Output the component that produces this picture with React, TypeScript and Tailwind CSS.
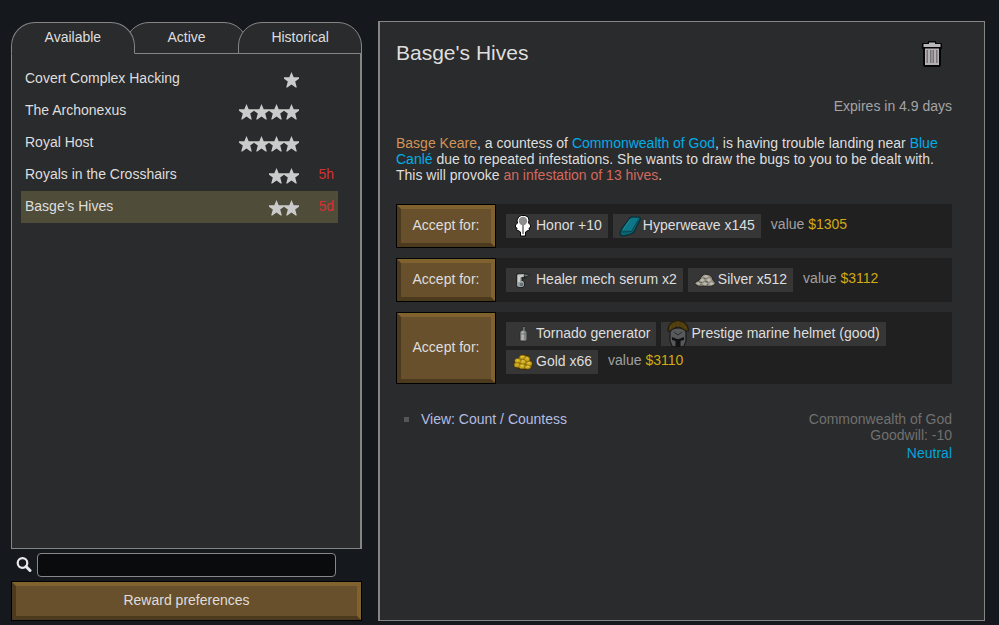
import { useState } from "react";
import type { ReactNode } from "react";

type Quest = { name: string; stars: number; expires?: string };

const quests: Quest[] = [
  { name: "Covert Complex Hacking", stars: 1 },
  { name: "The Archonexus", stars: 4 },
  { name: "Royal Host", stars: 4 },
  { name: "Royals in the Crosshairs", stars: 2, expires: "5h" },
  { name: "Basge's Hives", stars: 2, expires: "5d" },
];

function Star() {
  return (
    <svg width="15" height="16" viewBox="0 0 15 16" fill="#cbcbcb" aria-hidden="true">
      <path d="M7.5 0L9.700 5.200H15V6.700L11.200 9.600L12.800 15.600H11.700L7.500 12.500L3.300 15.600H2.200L3.800 9.600L0 6.700V5.200H5.300Z" />
    </svg>
  );
}

function TrashIcon() {
  return (
    <svg width="20" height="26" viewBox="0 0 20 26" aria-hidden="true">
      <path d="M6 0H14V2H20V8H19V24L18 26H2L1 24V8H0V2H6Z" fill="#050505" />
      <path d="M7 1.500H13V3H18.500V6H1.500V3H7Z" fill="#b9b6b9" />
      <path d="M3 7.500H17V24H3Z" fill="#b4b1b4" />
      <path d="M4.500 9H6V22H4.500ZM8 9H9.500V22H8ZM10.500 9H12V22H10.500ZM14 9H15.500V22H14Z" fill="#777377" />
    </svg>
  );
}

function SearchIcon() {
  return (
    <svg width="16" height="16" viewBox="0 0 16 16" fill="none" aria-hidden="true">
      <circle cx="6.500" cy="6" r="4.800" stroke="#e8eaec" strokeWidth="2.200" />
      <path d="M10 9.500L14 13.500" stroke="#e8eaec" strokeWidth="3" strokeLinecap="round" />
    </svg>
  );
}

function HonorIcon() {
  return (
    <svg width="18" height="24" viewBox="0 0 18 24" aria-hidden="true">
      <path
        d="M5 2.500L7.500 1.500H11L14 3L15 6L14.500 9L16.500 11V13.500L15 14L15.500 16L13 17L11.500 18V22H6.500V18L5 17L2.500 16L3 14L1.500 13.500V11L3.500 9L3 6Z"
        fill="#ffffff"
        stroke="#050505"
        strokeWidth="1"
      />
      <circle cx="9" cy="7" r="4.200" fill="#8d8d8d" />
      <path d="M8 9H10V20H8Z" fill="#8d8d8d" />
    </svg>
  );
}

function HyperweaveIcon() {
  return (
    <svg width="22" height="21" viewBox="0 0 22 21" aria-hidden="true">
      <path
        d="M10 3Q11 1 13 1L20 1Q22 2 21 4L16 14Q15 17 12 18L5 20Q1 20 1 17L2 14Z"
        fill="#0b6473"
        stroke="#062c33"
        strokeWidth="1.200"
      />
      <path d="M11.500 3Q12 2 13 2H19.500L13 14.500L3.500 14.500Z" fill="#0e7787" />
      <path d="M2.500 16L12.500 15.500L19.500 3.500" fill="none" stroke="#084650" strokeWidth="1" />
      <path d="M4 13.500L11 3.500" fill="none" stroke="#1f93a2" strokeWidth="1" />
    </svg>
  );
}

function SerumIcon() {
  return (
    <svg width="16" height="17" viewBox="0 0 16 17" aria-hidden="true">
      <path d="M1 3Q1 1 3 1H9L15 2V4L11 5V6L8 7V9L10 10V14L8 16H3L1 14Z" fill="#242728" />
      <path d="M2 3Q3 1.800 5 2H9V5H6.500V9H8L9 11V14L7 15H4L2 14Z" fill="#9da29f" />
      <path d="M3 3.500L8 3V4.500L5 5.500V10H3Z" fill="#cccec9" />
      <path d="M9 2.500L14.500 3L10 4.500Z" fill="#737a78" />
      <circle cx="6.500" cy="12.500" r="1.800" fill="#5c717b" />
    </svg>
  );
}

function SilverIcon() {
  return (
    <svg width="22" height="14" viewBox="0 0 22 14" aria-hidden="true">
      <path
        d="M.5 11L2 8.500L5 7.500L7 4L10 1L15 1.500L18 4L19 7L21.500 10L20 12.500L15 13.500L10 13L5 13.500Z"
        fill="#8d897e"
        stroke="#2a2824"
        strokeWidth="1"
      />
      <path
        d="M9 3.500L12 2L15 3.500L12 5ZM5.500 7.500L8 5.500L11 7L8 9ZM12 7L15 5L17.500 7L15 9ZM2 10.500L4.500 9L7 10.500L5 12ZM8 11L11 9L13.500 11L11 12.500ZM14.500 11L17.500 9L20 10.500L17 12.500Z"
        fill="#bdb9ac"
      />
      <path d="M5 9L8 9.500M10 5L12 6M11 8L14 9M14 11L13 12M7 11L6 12.500" stroke="#5a574f" strokeWidth=".8" />
    </svg>
  );
}

function GeneratorIcon() {
  return (
    <svg width="9" height="16" viewBox="0 0 9 16" aria-hidden="true">
      <path d="M4 0H6V4L8 5.500V14L7 15.500H1.500L.5 14V6L3 4Z" fill="#292b2c" />
      <path d="M4.400 1H5.400V5H4.400Z" fill="#a5a7a8" />
      <path d="M1.300 6L3 4.500H6L7.500 6V14L6.500 14.700H2L1.300 14Z" fill="#858788" />
      <path d="M2.500 5.500H4.800V14H2.500Z" fill="#b4b5b5" />
      <path d="M1.500 7.500H7.300V8.300H1.500Z" fill="#6b6e70" />
    </svg>
  );
}

function HelmetIcon() {
  return (
    <svg width="22" height="28" viewBox="0 0 22 28" aria-hidden="true">
      <path d="M1 11Q1 4 6 2Q11 -.5 16 2Q21 4 21.500 11L17 11Q14 7 11 7Q8 7 5 11Z" fill="#4f3c0f" stroke="#211b0d" strokeWidth="1.200" />
      <path d="M6 3L8 7M11 2V7M16 3L14 7M3 6L6 9M19 6L16 9" stroke="#604a14" strokeWidth=".8" />
      <path d="M3 12Q5 8 11 8Q17 8 19 12L19 21L17 26L13 27V20H9V27L5 26L3 21Z" fill="#58595b" stroke="#191a1b" strokeWidth="1.200" />
      <path d="M7 12L11 15L15 12" fill="none" stroke="#27292a" strokeWidth="1" />
      <path d="M5 17L10 19H12L17 17V20L13 21V27H9V21L5 20Z" fill="#111213" />
    </svg>
  );
}

function GoldIcon() {
  return (
    <svg width="20" height="16" viewBox="0 0 20 16" aria-hidden="true">
      <path
        d="M.8 10L2 6L6 4L7 1.500L12 .8L16 2L17 6L19.300 9L19 13L14 15.300L8 15.300L2 13Z"
        fill="#8c6c0e"
        stroke="#382b08"
        strokeWidth="1"
      />
      <g fill="#cfab20" stroke="#7d600d" strokeWidth=".5">
        <ellipse cx="9.500" cy="3.200" rx="3" ry="2" />
        <ellipse cx="14" cy="5" rx="2.800" ry="2.300" />
        <ellipse cx="4.800" cy="6.800" rx="3" ry="2.200" />
        <ellipse cx="10" cy="7.800" rx="3" ry="2.300" />
        <ellipse cx="4" cy="11" rx="2.800" ry="2.200" />
        <ellipse cx="9" cy="12.200" rx="3" ry="2.400" />
        <ellipse cx="16" cy="9.500" rx="3" ry="2.200" />
        <ellipse cx="14.700" cy="13" rx="3" ry="1.900" />
      </g>
      <path d="M8 2.500H10.500M3.500 6H5.500M9 7H11M13 4H15M8 11.500H10M15 8.800H17M14 12.500H16" stroke="#e6c944" strokeWidth="1" />
    </svg>
  );
}

type Reward = { label: string; icon: ReactNode };
type Offer = { rewards: Reward[]; value: string };

const offers: Offer[] = [
  {
    rewards: [
      { label: "Honor +10", icon: <HonorIcon /> },
      { label: "Hyperweave x145", icon: <HyperweaveIcon /> },
    ],
    value: "$1305",
  },
  {
    rewards: [
      { label: "Healer mech serum x2", icon: <SerumIcon /> },
      { label: "Silver x512", icon: <SilverIcon /> },
    ],
    value: "$3112",
  },
  {
    rewards: [
      { label: "Tornado generator", icon: <GeneratorIcon /> },
      { label: "Prestige marine helmet (good)", icon: <HelmetIcon /> },
      { label: "Gold x66", icon: <GoldIcon /> },
    ],
    value: "$3110",
  },
];

function BevelButton({ className, children }: { className: string; children: ReactNode }) {
  return (
    <button type="button" className={`flex border border-black ${className}`}>
      <span className="flex flex-1 items-center justify-center self-stretch border-4 border-t-[#80622f] border-r-[#80622f] border-b-[#4c3a1f] border-l-[#4c3a1f] bg-[#69502c] pb-0.5">
        {children}
      </span>
    </button>
  );
}

function Tabs() {
  const [active, setActive] = useState("Available");
  const tabs = [
    { name: "Available", place: "z-10" },
    { name: "Active", place: "-ml-2.5" },
    { name: "Historical", place: "-ml-2.5" },
  ];
  return (
    <div role="tablist" className="isolate flex">
      {tabs.map((tab) => (
        <button
          key={tab.name}
          type="button"
          role="tab"
          aria-selected={tab.name === active}
          onClick={() => setActive(tab.name)}
          className={`relative -mb-px h-8 flex-1 basis-0 rounded-t-[24px] border border-[#858585] bg-[#2a2b2c] pb-0.5 ${tab.place} ${
            tab.name === active ? "border-b-[#2a2b2c]" : ""
          }`}
        >
          {tab.name}
        </button>
      ))}
    </div>
  );
}

function QuestList() {
  const [selected, setSelected] = useState("Basge's Hives");
  return (
    <ul className="flex-1 border border-r-2 border-[#858585] bg-[#2a2b2c] pt-[9px] pr-[22px] pl-[9px]">
      {quests.map((quest) => (
        <li key={quest.name}>
          <button
            type="button"
            onClick={() => setSelected(quest.name)}
            className={`flex h-8 w-full items-center px-1 pb-0.5 text-left ${quest.name === selected ? "bg-[#4f4d39]" : ""}`}
          >
            <span className="flex-1">{quest.name}</span>
            <span className="flex pt-1">
              {Array.from({ length: quest.stars }, (_, i) => (
                <Star key={i} />
              ))}
            </span>
            <span className="w-[35px] text-right text-[#d33232]">{quest.expires}</span>
          </button>
        </li>
      ))}
    </ul>
  );
}

function OfferRow({ offer }: { offer: Offer }) {
  return (
    <div className="flex bg-[#202020]">
      <BevelButton className="w-[100px] shrink-0">Accept for:</BevelButton>
      <div className="flex flex-1 flex-wrap gap-x-[5px] gap-y-1 p-2.5">
        {offer.rewards.map((reward) => (
          <div key={reward.label} className="flex h-6 items-center bg-[#363636] pr-1.5">
            <span className="flex h-6 w-[30px] items-center justify-center pl-1">{reward.icon}</span>
            <span className="pb-0.5">{reward.label}</span>
          </div>
        ))}
        <div className="pl-[5px] leading-5 text-[#a0a0a0]">
          value <span className="text-[#d2aa12]">{offer.value}</span>
        </div>
      </div>
    </div>
  );
}

export default function App() {
  return (
    <div className="flex min-h-screen gap-4 bg-[#15191d] pt-[21px] pr-3.5 pb-1 pl-[11px] font-['Liberation_Sans',Arial,sans-serif] text-sm leading-4 text-[#dedede]">
      <aside className="flex w-[351px] shrink-0 flex-col pt-px">
        <Tabs />
        <QuestList />
        <div className="flex items-center gap-[5px] py-1 pr-[26px] pl-[5px]">
          <label htmlFor="quest-search" aria-label="Search quests">
            <SearchIcon />
          </label>
          <input
            id="quest-search"
            type="text"
            className="h-6 min-w-0 flex-1 rounded-[4px] border border-[#858789] bg-[#0a0b0c] px-2 outline-none"
          />
        </div>
        <BevelButton className="h-10">Reward preferences</BevelButton>
      </aside>

      <main className="min-w-0 flex-1 border border-l-2 border-[#858585] bg-[#2a2b2c] pr-8 pl-4">
        <header className="flex items-center justify-between pt-[19px] pr-2.5">
          <h1 className="pb-0.5 text-[21px] leading-6">Basge's Hives</h1>
          <button type="button" aria-label="Dismiss quest">
            <TrashIcon />
          </button>
        </header>
        <p className="mt-[31px] text-right text-[#a4a4a4]">Expires in 4.9 days</p>
        <p className="mt-[21px]">
          <span className="text-[#d09358]">Basge Keare</span>, a countess of{" "}
          <span className="text-[#00ade8]">Commonwealth of God</span>, is having trouble landing near{" "}
          <span className="text-[#00ade8]">Blue Canlé</span> due to repeated infestations. She wants to draw the bugs to
          you to be dealt with. This will provoke <span className="text-[#d2695f]">an infestation of 13 hives</span>.
        </p>
        <div className="mt-[21px] flex flex-col gap-2.5">
          {offers.map((offer) => (
            <OfferRow key={offer.value} offer={offer} />
          ))}
        </div>
        <footer className="mt-[27px] flex justify-between">
          <div className="flex h-4 items-center gap-3 pl-2">
            <span className="size-[5px] bg-[#565656]" />
            <a href="#count" className="text-[#b3bde2]">
              View: Count / Countess
            </a>
          </div>
          <div className="text-right text-[#707070]">
            <p>Commonwealth of God</p>
            <p>Goodwill: -10</p>
            <p className="mt-0.5 text-[#00a5dd]">Neutral</p>
          </div>
        </footer>
      </main>
    </div>
  );
}
